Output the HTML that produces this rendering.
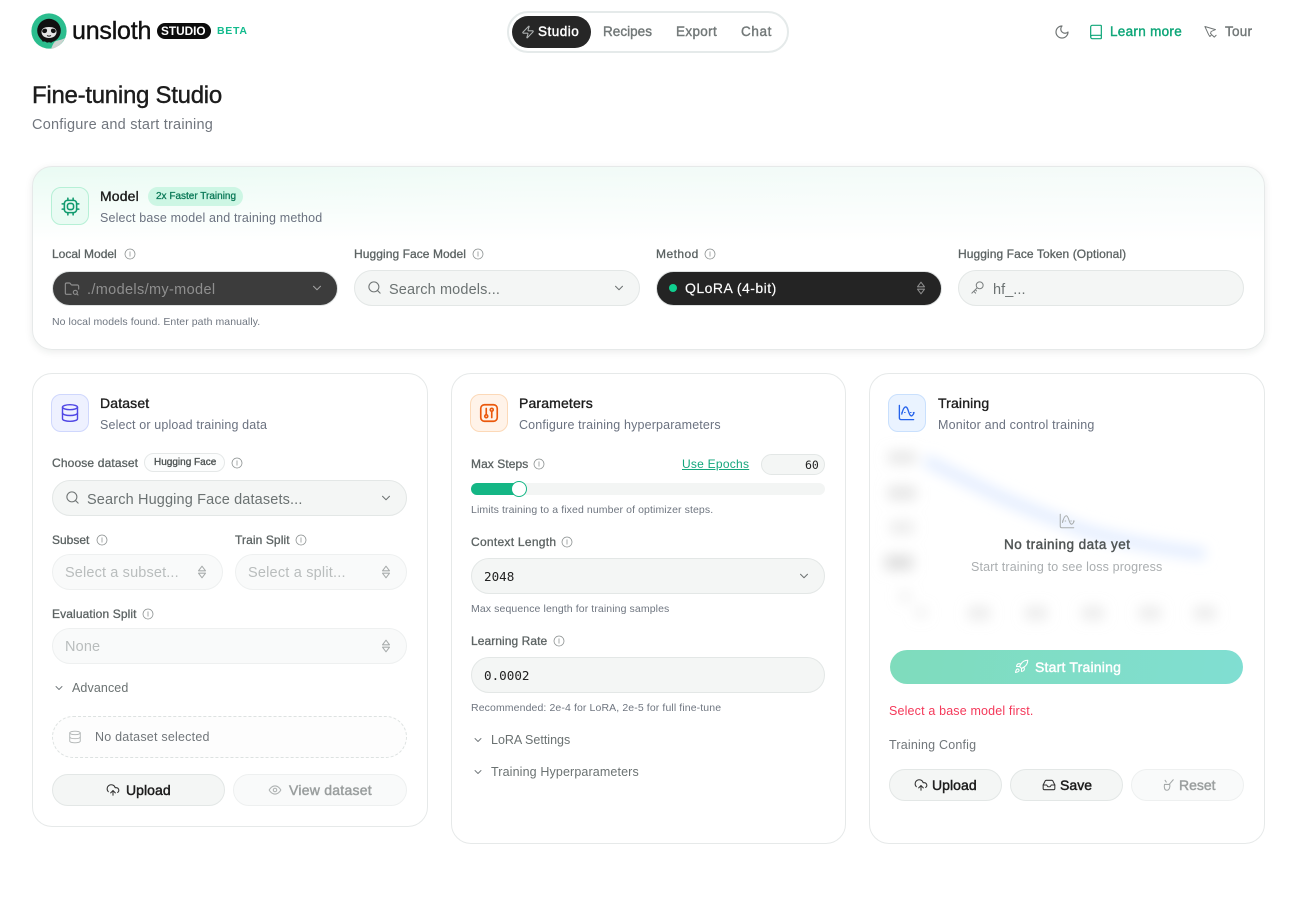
<!DOCTYPE html>
<html lang="en">
<head>
<meta charset="utf-8">
<title>Fine-tuning Studio</title>
<style>
html,body{margin:0;padding:0;background:#fff}
#p{position:relative;width:1302px;height:920px;overflow:hidden;background:#fff;font-family:"Liberation Sans",sans-serif;color:#1f1f1f}
#p div,#p span.t,#p svg{position:absolute}
.t{position:absolute;white-space:nowrap;line-height:20px;height:20px}
.h{font-size:14px;color:#1c1c1c;-webkit-text-stroke:.35px #1c1c1c;letter-spacing:.15px}
.s{font-size:12.5px;color:#6b7280;letter-spacing:.15px}
.l{font-size:12px;color:#5c6363;-webkit-text-stroke:.3px #5c6363;letter-spacing:.07px}
.n{font-size:10.5px;color:#6f7680;letter-spacing:.1px}
.ph{font-size:14.5px;color:#6b7272;letter-spacing:.14px}
.dis{font-size:14.5px;color:#b9bdbd;letter-spacing:.14px}
.sec{font-size:12.5px;color:#6b7272;letter-spacing:.13px}
.b{font-size:14px;-webkit-text-stroke:.45px currentColor;letter-spacing:.05px}
.m{font-family:"DejaVu Sans Mono","Liberation Mono",monospace;font-size:12.6px;color:#222}
.nav{font-size:13.5px;color:#727878;-webkit-text-stroke:.4px #727878;letter-spacing:.18px}
.card{background:#fff;border:1px solid #e6e9e9;border-radius:20px;box-sizing:border-box}
.inp{background:#f4f6f5;border:1px solid #e3e7e6;border-radius:18px;box-sizing:border-box}
.off{background:#f9fafa;border:1px solid #eef0f0;border-radius:18px;box-sizing:border-box}
.tile{width:38px;height:38px;border-radius:10px;box-sizing:border-box}
svg.i{fill:none;stroke:currentColor;stroke-width:2;stroke-linecap:round;stroke-linejoin:round}
</style>
</head>
<body>
<div id="p">
<svg style="left:0;top:0;width:0;height:0"><defs>
<symbol id="info" viewBox="0 0 24 24"><circle cx="12" cy="12" r="10"/><path d="M12 7.5v9"/></symbol>
<symbol id="chev" viewBox="0 0 24 24"><path d="m6 9 6 6 6-6"/></symbol>
<symbol id="search" viewBox="0 0 24 24"><circle cx="11" cy="11" r="8"/><path d="m21 21-4.3-4.3"/></symbol>
<symbol id="updown" viewBox="0 0 24 24"><path d="M12 2l6 8H6zM6 14h12l-6 8z"/></symbol>
<symbol id="db" viewBox="0 0 24 24"><ellipse cx="12" cy="5" rx="9" ry="3"/><path d="M3 5v14a9 3 0 0 0 18 0V5"/><path d="M3 12a9 3 0 0 0 18 0"/></symbol>
<symbol id="cloud" viewBox="0 0 24 24"><path d="M12 13v8"/><path d="M4 14.9A7 7 0 1 1 15.7 8h1.8a4.5 4.5 0 0 1 2.5 8.2"/><path d="m8 17 4-4 4 4"/></symbol>
<symbol id="wave" viewBox="0 0 24 24"><path d="M3 3v16a2 2 0 0 0 2 2h16"/><path d="M6 14C7.5 8 9 5 11 5s3 4 4 7 2.5 5 4 4 2-2 2.5-4"/><path d="M6 12h.8M9.5 12h.8M17 12h.8M20.5 12h.8" stroke-width="1.3"/></symbol>
</defs></svg>

<!-- Header / logo -->
<svg style="left:30px;top:12px" width="40" height="38" viewBox="0 0 40 38">
<circle cx="19" cy="19" r="17.6" fill="#2bbd8e"/>
<circle cx="19" cy="18.6" r="11.8" fill="#111"/>
<path d="M11 27l2 3 2-2 2 3 2-2 2 2 3-3v-4H11z" fill="#111"/>
<path d="M11.5 20c0-3.500 3-5 7.500-5s7.500 1.500 7.500 5-3 6-7.500 6-7.500-2.500-7.500-6z" fill="#e4e4e4"/>
<path d="M12.500 18c1-1.500 4-2 4.500 0 .5 2-1.500 3.500-3 3-1.500-.3-2.300-1.700-1.500-3zM25.500 18c-1-1.500-4-2-4.500 0-.5 2 1.500 3.500 3 3 1.500-.3 2.300-1.700 1.500-3z" fill="#111"/>
<path d="M17 23.500c1 .8 3 .8 4 0" stroke="#111" stroke-width="1" fill="none"/>
<path d="M21 37c6-1 11-5 14-11-3 2-7 2-10 3.500-2 2-3 5-4 7.500z" fill="#cdd3d0"/>
<path d="M24 38c6-1 11-6 13-12l3 0c-2 7-8 12-16 12.500z" fill="#fff"/>
</svg>
<span class="t" style="left:72px;top:20px;font-size:25px;line-height:22px;height:22px;letter-spacing:-.2px;color:#111;-webkit-text-stroke:.4px #111">unsloth</span>
<div style="left:157px;top:23px;width:54px;height:16px;background:#0c0c0c;border-radius:8px"></div>
<span class="t" style="left:161px;top:21px;font-size:11.8px;font-weight:700;color:#fff;letter-spacing:0">STUDIO</span>
<span class="t" style="left:217px;top:21px;font-size:10.5px;font-weight:700;color:#12bb8d;letter-spacing:.7px">BETA</span>

<!-- Nav -->
<div style="left:507px;top:11px;width:282px;height:42px;border:2px solid #e5eaea;border-radius:21px;box-sizing:border-box;background:#fff"></div>
<div style="left:512px;top:16px;width:79px;height:32px;border-radius:16px;background:#262626"></div>
<svg class="i" style="left:521px;top:25px;color:#aeb2b2;stroke-width:1.8" width="14" height="14" viewBox="0 0 24 24"><path d="M4 14a1 1 0 0 1-.78-1.63l9.9-10.2a.5.5 0 0 1 .86.46l-1.92 6.02A1 1 0 0 0 13 10h7a1 1 0 0 1 .78 1.63l-9.9 10.2a.5.5 0 0 1-.86-.46l1.92-6.02A1 1 0 0 0 11 14z"/></svg>
<span class="t" style="left:538px;top:22px;font-size:13.5px;color:#fff;-webkit-text-stroke:.45px #fff;letter-spacing:.5px">Studio</span>
<span class="t nav" style="left:603px;top:22px;letter-spacing:.03px">Recipes</span>
<span class="t nav" style="left:676px;top:22px;letter-spacing:.35px">Export</span>
<span class="t nav" style="left:741px;top:22px;letter-spacing:.6px">Chat</span>

<svg class="i" style="left:1054px;top:24px;color:#6f7474;stroke-width:1.8" width="16" height="16" viewBox="0 0 24 24"><path d="M12 3a6 6 0 0 0 9 9 9 9 0 1 1-9-9Z"/></svg>
<svg class="i" style="left:1088px;top:24px;color:#0ea678;stroke-width:1.8" width="16" height="16" viewBox="0 0 24 24"><path d="M4 19.500v-15A2.500 2.500 0 0 1 6.500 2H19a1 1 0 0 1 1 1v18a1 1 0 0 1-1 1H6.500a2.500 2.500 0 0 1 0-5H20"/></svg>
<span class="t nav" style="left:1110px;top:22px;color:#0ea678;-webkit-text-stroke:.4px #0ea678;letter-spacing:.3px">Learn more</span>
<svg class="i" style="left:1203px;top:24px;color:#6f7474;stroke-width:1.5" width="15" height="15" viewBox="0 0 24 24"><path d="M3 4l17 5-7 3-1 3 2 2-3 3-2-3z"/><path d="M15 18l3 3 3-3"/></svg>
<span class="t nav" style="left:1225px;top:22px;letter-spacing:.25px">Tour</span>

<!-- Title -->
<span class="t" style="left:32px;top:84px;height:24px;line-height:24px;font-size:24px;color:#1c1c1c;letter-spacing:-.27px;-webkit-text-stroke:.4px #1c1c1c">Fine-tuning Studio</span>
<span class="t" style="left:32px;top:114.6px;font-size:14.5px;color:#71767e;letter-spacing:.22px">Configure and start training</span>

<!-- Model card -->
<div class="card" style="left:31.5px;top:165.5px;width:1233px;height:184px;box-shadow:0 2px 8px rgba(20,40,30,.09);background:linear-gradient(180deg,rgba(255,255,255,0),#fff 75px),linear-gradient(90deg,#e9fbf3,#f1fbf7 40%,#f5fbf9)"></div>
<div class="tile" style="left:51px;top:187px;background:#e9fbf3;border:1px solid #b6f0d6"></div>
<svg class="i" style="left:59.500px;top:195.500px;color:#109a6e;stroke-width:1.8" width="21" height="21" viewBox="0 0 24 24"><rect x="5" y="5" width="14" height="14" rx="3.500"/><rect x="8.500" y="8.500" width="7" height="7" rx="2.500"/><path d="M9 2.500V5M15 2.500V5M9 19v2.500M15 19v2.500M2.500 9H5M2.500 15H5M19 9h2.500M19 15h2.500"/></svg>
<span class="t h" style="left:100px;top:186px">Model</span>
<div style="left:148px;top:187px;width:95px;height:19px;border-radius:10px;background:#cdf6e4"></div>
<span class="t" style="left:156px;top:187px;height:19px;line-height:19px;font-size:10px;color:#0b7a58;-webkit-text-stroke:.3px #0b7a58">2x Faster Training</span>
<span class="t s" style="left:100px;top:208px">Select base model and training method</span>

<span class="t l" style="left:52px;top:244px;letter-spacing:0">Local Model</span>
<svg class="i" style="left:124px;top:248px;color:#8a8f8f;stroke-width:1.5" width="12" height="12"><use href="#info"/></svg>
<div style="left:52px;top:271px;width:286px;height:35px;border-radius:18px;background:#3c3c3c;border:1px solid #e0e3e3;box-sizing:border-box"></div>
<svg class="i" style="left:64px;top:281px;color:#8f8f8f;stroke-width:1.7" width="16" height="16" viewBox="0 0 24 24"><path d="M10.700 20H4a2 2 0 0 1-2-2V5a2 2 0 0 1 2-2h3.900a2 2 0 0 1 1.690.9l.81 1.200a2 2 0 0 0 1.670.9H20a2 2 0 0 1 2 2v4.100"/><circle cx="17" cy="17" r="3"/><path d="m21 21-1.900-1.900"/></svg>
<span class="t ph" style="left:87px;top:280px;color:#8f8f8f;letter-spacing:.35px">./models/my-model</span>
<svg class="i" style="left:310px;top:281px;color:#a5a5a5;stroke-width:1.8" width="14" height="14"><use href="#chev"/></svg>
<span class="t n" style="left:52px;top:312px;letter-spacing:.07px">No local models found. Enter path manually.</span>

<span class="t l" style="left:354px;top:244px">Hugging Face Model</span>
<svg class="i" style="left:472px;top:248px;color:#8a8f8f;stroke-width:1.5" width="12" height="12"><use href="#info"/></svg>
<div class="inp" style="left:354px;top:270px;width:286px;height:36px"></div>
<svg class="i" style="left:367px;top:280px;color:#707575;stroke-width:1.7" width="15" height="15"><use href="#search"/></svg>
<span class="t ph" style="left:389px;top:280px">Search models...</span>
<svg class="i" style="left:612px;top:281px;color:#6c7171;stroke-width:1.8" width="14" height="14"><use href="#chev"/></svg>

<span class="t l" style="left:656px;top:244px;letter-spacing:.45px">Method</span>
<svg class="i" style="left:704px;top:248px;color:#8a8f8f;stroke-width:1.5" width="12" height="12"><use href="#info"/></svg>
<div style="left:656px;top:271px;width:286px;height:35px;border-radius:18px;background:#242424;border:1px solid #dfe2e2;box-sizing:border-box"></div>
<div style="left:669px;top:284px;width:8px;height:8px;border-radius:4px;background:#10cf8f"></div>
<span class="t" style="left:685px;top:278px;font-size:14px;color:#fff;-webkit-text-stroke:.15px #fff;letter-spacing:.47px">QLoRA (4-bit)</span>
<svg class="i" style="left:914px;top:281px;color:#8c8c8c;stroke-width:1.8" width="14" height="14"><use href="#updown"/></svg>

<span class="t l" style="left:958px;top:244px;letter-spacing:.08px">Hugging Face Token (Optional)</span>
<div class="inp" style="left:958px;top:270px;width:286px;height:36px"></div>
<svg class="i" style="left:970px;top:280px;color:#7a7f7f;stroke-width:1.6" width="15" height="15" viewBox="0 0 24 24"><circle cx="15.500" cy="8.500" r="5.500"/><path d="M11.500 12.500 3 21M6 18l3 3M8.500 15.500l2 2"/></svg>
<span class="t ph" style="left:993px;top:280px;letter-spacing:.05px">hf_...</span>

<!-- Dataset -->
<div class="card" style="left:31.5px;top:372.5px;width:396px;height:454px"></div>
<div class="tile" style="left:51px;top:394px;background:#eef1ff;border:1px solid #cfd7fd"></div>
<svg class="i" style="left:60px;top:403px;color:#4f46e5;stroke-width:1.7" width="20" height="20"><use href="#db"/></svg>
<span class="t h" style="left:100px;top:393px">Dataset</span>
<span class="t s" style="left:100px;top:415px">Select or upload training data</span>

<span class="t l" style="left:52px;top:453px;letter-spacing:.15px">Choose dataset</span>
<div style="left:144px;top:453px;width:81px;height:19px;border:1px solid #e5e8e8;border-radius:10px;box-sizing:border-box;background:#fcfdfd"></div>
<span class="t" style="left:154px;top:453px;height:19px;line-height:19px;font-size:10px;color:#4b5151;-webkit-text-stroke:.3px #4b5151">Hugging Face</span>
<svg class="i" style="left:231px;top:457px;color:#8a8f8f;stroke-width:1.5" width="12" height="12"><use href="#info"/></svg>
<div class="inp" style="left:52px;top:480px;width:355px;height:36px"></div>
<svg class="i" style="left:65px;top:490px;color:#707575;stroke-width:1.7" width="15" height="15"><use href="#search"/></svg>
<span class="t ph" style="left:87px;top:490px">Search Hugging Face datasets...</span>
<svg class="i" style="left:379px;top:491px;color:#6c7171;stroke-width:1.8" width="14" height="14"><use href="#chev"/></svg>

<span class="t l" style="left:52px;top:530px;letter-spacing:0">Subset</span>
<svg class="i" style="left:96px;top:534px;color:#8a8f8f;stroke-width:1.5" width="12" height="12"><use href="#info"/></svg>
<div class="off" style="left:52px;top:554px;width:171px;height:36px"></div>
<span class="t dis" style="left:65px;top:563px">Select a subset...</span>
<svg class="i" style="left:195px;top:565px;color:#a8acac;stroke-width:1.8" width="14" height="14"><use href="#updown"/></svg>

<span class="t l" style="left:235px;top:530px;letter-spacing:.1px">Train Split</span>
<svg class="i" style="left:295px;top:534px;color:#8a8f8f;stroke-width:1.5" width="12" height="12"><use href="#info"/></svg>
<div class="off" style="left:235px;top:554px;width:172px;height:36px"></div>
<span class="t dis" style="left:248px;top:563px;letter-spacing:.2px">Select a split...</span>
<svg class="i" style="left:379px;top:565px;color:#a8acac;stroke-width:1.8" width="14" height="14"><use href="#updown"/></svg>

<span class="t l" style="left:52px;top:604px;letter-spacing:.12px">Evaluation Split</span>
<svg class="i" style="left:142px;top:608px;color:#8a8f8f;stroke-width:1.5" width="12" height="12"><use href="#info"/></svg>
<div class="off" style="left:52px;top:628px;width:355px;height:36px"></div>
<span class="t dis" style="left:65px;top:637px">None</span>
<svg class="i" style="left:379px;top:639px;color:#a8acac;stroke-width:1.8" width="14" height="14"><use href="#updown"/></svg>

<svg class="i" style="left:53px;top:682px;color:#71767a;stroke-width:1.8" width="12" height="12"><use href="#chev"/></svg>
<span class="t sec" style="left:72px;top:678px;letter-spacing:.1px">Advanced</span>

<div style="left:52px;top:716px;width:355px;height:42px;border:1px dashed #dde2e1;border-radius:21px;box-sizing:border-box;background:#fdfdfd"></div>
<svg class="i" style="left:68px;top:730px;color:#aeb2b2;stroke-width:1.5" width="14" height="14"><use href="#db"/></svg>
<span class="t" style="left:95px;top:727px;font-size:12.5px;color:#71767a;letter-spacing:.22px">No dataset selected</span>

<div class="inp" style="left:52px;top:774px;width:173px;height:32px;border-radius:16px"></div>
<svg class="i" style="left:106px;top:783px;color:#333;stroke-width:1.8" width="14" height="14"><use href="#cloud"/></svg>
<span class="t b" style="left:126px;top:780px;color:#1c1c1c">Upload</span>
<div class="off" style="left:233px;top:774px;width:174px;height:32px;border-radius:16px"></div>
<svg class="i" style="left:268px;top:783px;color:#aeb2b2;stroke-width:1.8" width="14" height="14" viewBox="0 0 24 24"><path d="M2 12s3.600-7 10-7 10 7 10 7-3.600 7-10 7-10-7-10-7z"/><circle cx="12" cy="12" r="3"/></svg>
<span class="t b" style="left:289px;top:780px;color:#9a9e9e;letter-spacing:.25px">View dataset</span>

<!-- Parameters -->
<div class="card" style="left:450.5px;top:372.5px;width:395px;height:471px"></div>
<div class="tile" style="left:470px;top:394px;background:#fff3e9;border:1px solid #fcd9b8"></div>
<svg class="i" style="left:478px;top:402px;color:#ea580c;stroke-width:1.8" width="22" height="22" viewBox="0 0 24 24"><rect x="3" y="3" width="18" height="18" rx="4"/><path d="M9 7v6M15 11v6"/><circle cx="9" cy="15.500" r="1.600"/><circle cx="15" cy="8.500" r="1.600"/></svg>
<span class="t h" style="left:519px;top:393px">Parameters</span>
<span class="t s" style="left:519px;top:415px">Configure training hyperparameters</span>

<span class="t l" style="left:471px;top:454px">Max Steps</span>
<svg class="i" style="left:533px;top:458px;color:#8a8f8f;stroke-width:1.5" width="12" height="12"><use href="#info"/></svg>
<span class="t" style="left:682px;top:454px;font-size:12px;color:#15a67c;text-decoration:underline;letter-spacing:.25px">Use Epochs</span>
<div class="inp" style="left:761px;top:454px;width:64px;height:21px;border-radius:11px"></div>
<span class="t m" style="left:805px;top:454.500px;font-size:11.500px">60</span>
<div style="left:471px;top:483px;width:354px;height:12px;border-radius:6px;background:#f3f5f4"></div>
<div style="left:471px;top:483px;width:46px;height:12px;border-radius:6px 0 0 6px;background:#14b685"></div>
<div style="left:511px;top:481px;width:16px;height:16px;border-radius:8px;background:#fff;border:1.500px solid #14b685;box-sizing:border-box"></div>
<span class="t n" style="left:471px;top:500px">Limits training to a fixed number of optimizer steps.</span>

<span class="t l" style="left:471px;top:532px;letter-spacing:.28px">Context Length</span>
<svg class="i" style="left:561px;top:536px;color:#8a8f8f;stroke-width:1.5" width="12" height="12"><use href="#info"/></svg>
<div class="inp" style="left:471px;top:558px;width:354px;height:36px"></div>
<span class="t m" style="left:484px;top:567px">2048</span>
<svg class="i" style="left:797px;top:569px;color:#6c7171;stroke-width:1.8" width="14" height="14"><use href="#chev"/></svg>
<span class="t n" style="left:471px;top:599px">Max sequence length for training samples</span>

<span class="t l" style="left:471px;top:631px">Learning Rate</span>
<svg class="i" style="left:553px;top:635px;color:#8a8f8f;stroke-width:1.5" width="12" height="12"><use href="#info"/></svg>
<div class="inp" style="left:471px;top:657px;width:354px;height:36px"></div>
<span class="t m" style="left:484px;top:666px">0.0002</span>
<span class="t n" style="left:471px;top:698px;letter-spacing:.11px">Recommended: 2e-4 for LoRA, 2e-5 for full fine-tune</span>

<svg class="i" style="left:472px;top:734px;color:#71767a;stroke-width:1.8" width="12" height="12"><use href="#chev"/></svg>
<span class="t sec" style="left:491px;top:730px;letter-spacing:0">LoRA Settings</span>
<svg class="i" style="left:472px;top:766px;color:#71767a;stroke-width:1.8" width="12" height="12"><use href="#chev"/></svg>
<span class="t sec" style="left:491px;top:762px">Training Hyperparameters</span>

<!-- Training -->
<div class="card" style="left:868.5px;top:372.5px;width:396px;height:471px"></div>
<div class="tile" style="left:888px;top:394px;background:#eaf3ff;border:1px solid #c9e0fd"></div>
<svg class="i" style="left:897px;top:403px;color:#2563eb;stroke-width:1.7" width="19" height="19"><use href="#wave"/></svg>
<span class="t h" style="left:938px;top:393px">Training</span>
<span class="t s" style="left:938px;top:415px;letter-spacing:.18px">Monitor and control training</span>

<svg style="left:870px;top:430px" width="390" height="212" viewBox="870 430 390 212">
<defs><filter id="bl" filterUnits="userSpaceOnUse" x="870" y="430" width="390" height="212"><feGaussianBlur stdDeviation="6.5"/></filter></defs>
<g filter="url(#bl)">
<path d="M925 460C950 472 975 485 1001 497S1050 517 1075 527 1170 550 1205 554" fill="none" stroke="#e3edfe" stroke-width="12"/>
<g fill="#dcdcdc">
<rect x="888" y="451" width="28" height="13" opacity=".65"/>
<rect x="888" y="486" width="28" height="14" opacity=".7"/>
<rect x="890" y="521" width="24" height="13" opacity=".55"/>
<rect x="885" y="555" width="28" height="15" opacity=".95"/>
<rect x="899" y="591" width="12" height="11" opacity=".4"/>
<rect x="915" y="607" width="12" height="11" opacity=".4"/>
<rect x="968" y="606" width="22" height="14" opacity=".55"/>
<rect x="1025" y="606" width="22" height="14" opacity=".55"/>
<rect x="1082" y="606" width="22" height="14" opacity=".55"/>
<rect x="1139" y="606" width="22" height="14" opacity=".55"/>
<rect x="1194" y="606" width="22" height="14" opacity=".55"/>
</g>
</g>
</svg>
<svg class="i" style="left:1058px;top:512px;color:#a9adad;stroke-width:1.4" width="18" height="18"><use href="#wave"/></svg>
<span class="t" style="left:1004px;top:535px;font-size:13.500px;color:#4f5454;-webkit-text-stroke:.4px #4f5454;letter-spacing:.47px">No training data yet</span>
<span class="t" style="left:971px;top:557px;font-size:12.500px;color:#aaaeb0;letter-spacing:.15px">Start training to see loss progress</span>

<div style="left:890px;top:650px;width:353px;height:34px;border-radius:17px;background:linear-gradient(100deg,#7fdcbc,#80ded2)"></div>
<svg class="i" style="left:1014px;top:659px;color:#fff;stroke-width:1.7" width="15" height="15" viewBox="0 0 24 24"><path d="M4.500 16.500c-1.500 1.260-2 5-2 5s3.740-.5 5-2c.71-.84.7-2.130-.09-2.910a2.180 2.180 0 0 0-2.910-.09z"/><path d="m12 15-3-3a22 22 0 0 1 2-3.950A12.880 12.880 0 0 1 22 2c0 2.720-.78 7.500-6 11a22.350 22.350 0 0 1-4 2z"/><path d="M9 12H4s.55-3.030 2-4c1.620-1.080 5 0 5 0"/><path d="M12 15v5s3.030-.55 4-2c1.080-1.620 0-5 0-5"/></svg>
<span class="t b" style="left:1035px;top:657px;color:#fff;letter-spacing:.2px">Start Training</span>
<span class="t" style="left:889px;top:701px;font-size:12.500px;color:#f4395a;letter-spacing:.16px">Select a base model first.</span>
<span class="t" style="left:889px;top:735px;font-size:12.500px;color:#71767a;letter-spacing:.2px">Training Config</span>

<div class="inp" style="left:889px;top:769px;width:113px;height:32px;border-radius:16px"></div>
<svg class="i" style="left:914px;top:778px;color:#333;stroke-width:1.8" width="14" height="14"><use href="#cloud"/></svg>
<span class="t b" style="left:932px;top:775px;color:#1c1c1c">Upload</span>
<div class="inp" style="left:1010px;top:769px;width:113px;height:32px;border-radius:16px"></div>
<svg class="i" style="left:1042px;top:778px;color:#333;stroke-width:1.8" width="14" height="14" viewBox="0 0 24 24"><path d="M22 12h-6l-2 3h-4l-2-3H2"/><path d="M5.500 5 2 12v6a2 2 0 0 0 2 2h16a2 2 0 0 0 2-2v-6l-3.500-7a2 2 0 0 0-1.800-1H7.300a2 2 0 0 0-1.800 1z"/></svg>
<span class="t b" style="left:1060px;top:775px;color:#1c1c1c">Save</span>
<div class="off" style="left:1131px;top:769px;width:113px;height:32px;border-radius:16px"></div>
<svg class="i" style="left:1161px;top:778px;color:#a4a8a8;stroke-width:1.8" width="14" height="14" viewBox="0 0 24 24"><path d="M21 3l-7 8"/><path d="M6 11h9c1 5-1 10-5 10-4 0-5-5-4-10z"/><path d="M7 4l2 3"/></svg>
<span class="t b" style="left:1179px;top:775px;color:#9a9e9e;letter-spacing:0">Reset</span>
</div>
</body>
</html>
